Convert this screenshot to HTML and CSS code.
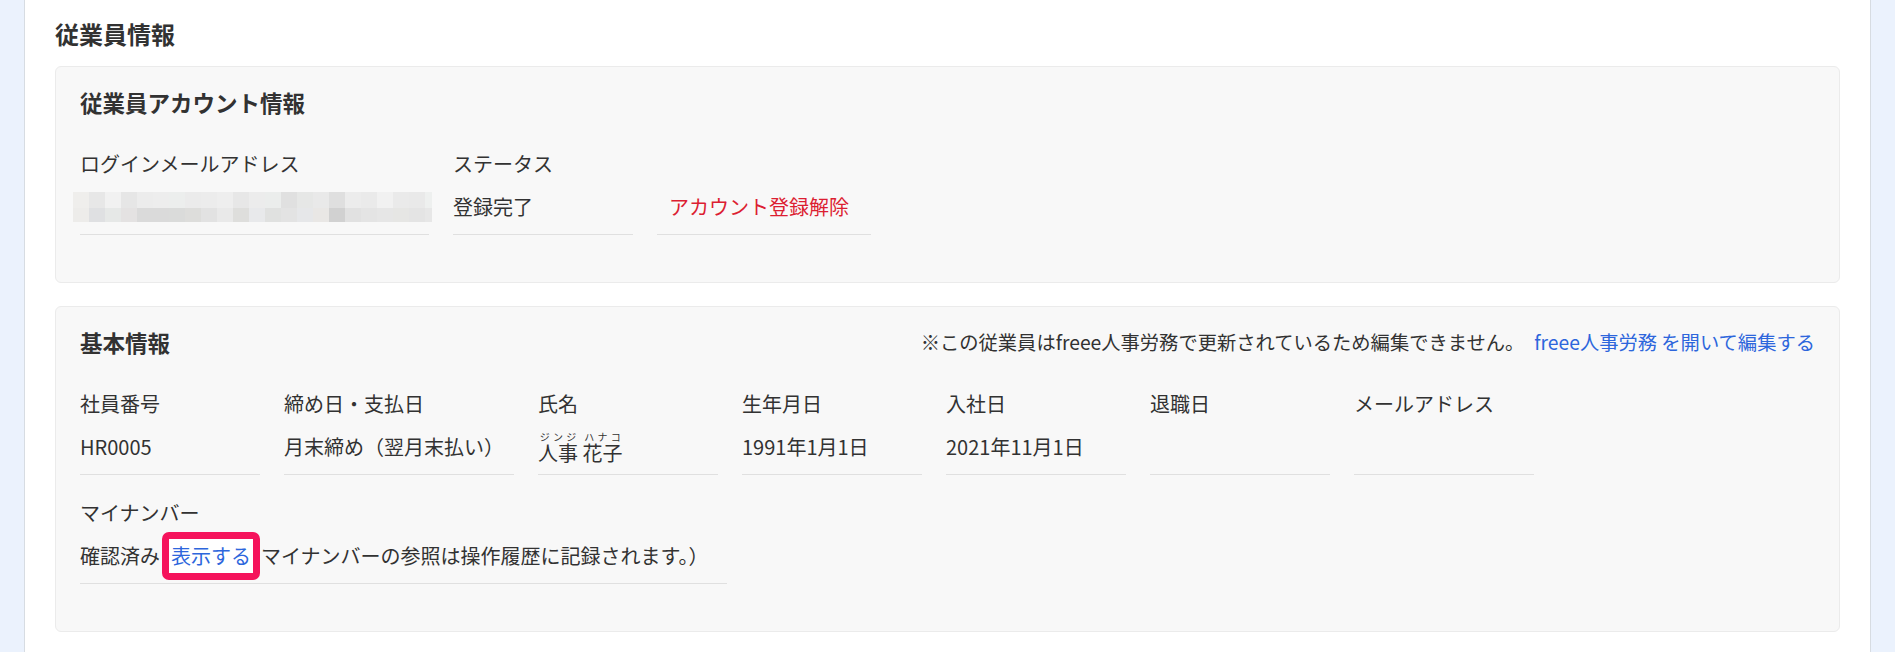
FILE: index.html
```html
<!DOCTYPE html>
<html lang="ja">
<head>
  <meta charset="UTF-8">
  <meta name="viewport" content="width=device-width, initial-scale=1.0">
  <title>従業員情報</title>
  <link rel="stylesheet" href="styles.css">
</head>
<body>
  <div class="page">
    <aside class="rail rail-left"></aside>

    <main class="content">
      <h1 class="page-title">従業員情報</h1>

      <section class="card">
        <div class="card-head">
          <h2 class="card-title">従業員アカウント情報</h2>
        </div>
        <div class="fields">
          <div class="field field-email">
            <div class="label">ログインメールアドレス</div>
            <div class="value"><div class="blurred"></div></div>
          </div>
          <div class="field">
            <div class="label">ステータス</div>
            <div class="value">登録完了</div>
          </div>
          <div class="field">
            <div class="label">&nbsp;</div>
            <div class="value"><a class="danger-link" href="#">アカウント登録解除</a></div>
          </div>
        </div>
      </section>

      <section class="card">
        <div class="card-head">
          <h2 class="card-title">基本情報</h2>
          <p class="notice">※この従業員はfreee人事労務で更新されているため編集できません。<a href="#">freee人事労務 を開いて編集する</a></p>
        </div>
        <div class="fields">
          <div class="field">
            <div class="label">社員番号</div>
            <div class="value">HR0005</div>
          </div>
          <div class="field">
            <div class="label">締め日・支払日</div>
            <div class="value">月末締め（翌月末払い）</div>
          </div>
          <div class="field">
            <div class="label">氏名</div>
            <div class="value"><ruby>人事<rt>ジンジ</rt></ruby> <ruby>花子<rt>ハナコ</rt></ruby></div>
          </div>
          <div class="field">
            <div class="label">生年月日</div>
            <div class="value">1991年1月1日</div>
          </div>
          <div class="field">
            <div class="label">入社日</div>
            <div class="value">2021年11月1日</div>
          </div>
          <div class="field">
            <div class="label">退職日</div>
            <div class="value"></div>
          </div>
          <div class="field">
            <div class="label">メールアドレス</div>
            <div class="value"></div>
          </div>
        </div>
        <div class="fields">
          <div class="field">
            <div class="label">マイナンバー</div>
            <div class="value value-long">確認済み<span class="highlight"><a href="#">表示する</a></span>マイナンバーの参照は操作履歴に記録されます。）</div>
          </div>
        </div>
      </section>
    </main>

    <aside class="rail rail-right"></aside>
  </div>
</body>
</html>
```

FILE: styles.css
```css
body { margin: 0; font-family: "Noto Sans CJK JP", "Noto Sans", sans-serif; color: #323232; background: #fff; }
a { color: #2d66dc; text-decoration: none; }

.page { display: flex; min-height: 652px; }
.rail { width: 24px; flex-shrink: 0; background: #ebf2fd; }
.rail-left { border-right: 1px solid #d7dce2; }
.rail-right { border-left: 1px solid #d7dce2; }

.content { flex: 1; padding: 16px 30px 0; }
.page-title { margin: 0 0 14px; font-size: 24px; line-height: 36px; font-weight: 700; }

.card { background: #f8f8f8; border: 1px solid #ebebeb; border-radius: 6px; padding: 18px 24px 47px; margin-bottom: 23px; }
.card-head { display: flex; justify-content: space-between; align-items: center; margin-bottom: 30px; }
.card-title { margin: 0; font-size: 22.5px; line-height: 34px; font-weight: 700; }
.notice { margin: 0; font-size: 19.3px; line-height: 30px; }
.notice a { margin-left: 10px; }

.fields { display: flex; gap: 24px; }
.fields + .fields { margin-top: 23px; }
.field { min-width: 180px; }
.field-email { width: 349px; }
.label { font-size: 20px; line-height: 30px; margin-bottom: 13px; white-space: nowrap; }
.value { font-size: 20px; line-height: 30px; height: 30px; padding: 0 10px 12px 0; border-bottom: 1px solid #e0e0e0; white-space: nowrap; }
.value-long { padding-right: 18px; }
.value rt { font-size: 10px; }

.danger-link { color: #dc1e32; padding: 0 12px; }

/* pixelated email placeholder */
.blurred {
  width: 359px;
  height: 30px;
  margin-left: -7px;
  background:
    linear-gradient(to right,
      #efeeec 0 16px, #e7e7e7 16px 32px, #f1f1f1 32px 48px, #e6e6e6 48px 64px,
      #ececec 64px 80px, #ededed 80px 96px, #eceeed 96px 112px, #ebebeb 112px 128px,
      #ececec 128px 144px, #eeeeee 144px 160px, #e7e7e7 160px 176px, #ececec 176px 192px,
      #ebedec 192px 208px, #e0e0e0 208px 224px, #e6e7e6 224px 240px, #e9e9e9 240px 256px,
      #dfdfdf 256px 272px, #ececec 272px 288px, #eaeaea 288px 304px, #f1f1f1 304px 320px,
      #eaeaea 320px 336px, #e9e9e9 336px 352px, #eef0ef 352px) top / 100% 16px no-repeat,
    linear-gradient(to right,
      #edecea 0 16px, #dfe0e2 16px 32px, #e6e8e7 32px 48px, #e4e2e2 48px 64px,
      #dadada 64px 80px, #dadada 80px 96px, #dadbda 96px 112px, #dddddb 112px 128px,
      #e2e2e2 128px 144px, #e9e9e9 144px 160px, #dededc 160px 176px, #e8e9eb 176px 192px,
      #e0e1e0 192px 208px, #e3e3e3 208px 224px, #e6e7e9 224px 240px, #e9e7e5 240px 256px,
      #d1d1d1 256px 272px, #e1e1e1 272px 288px, #e4e4e4 288px 304px, #e6e6e6 304px 320px,
      #e6e6e4 320px 336px, #e4e4e4 336px 352px, #e7e7e7 352px) bottom / 100% 14px no-repeat;
}

.highlight {
  display: inline-block;
  line-height: 30px;
  padding: 2px;
  margin: -9px 1px -9px 2px;
  border: 7px solid #f5135c;
  border-radius: 7px;
  background: #fff;
}
```
